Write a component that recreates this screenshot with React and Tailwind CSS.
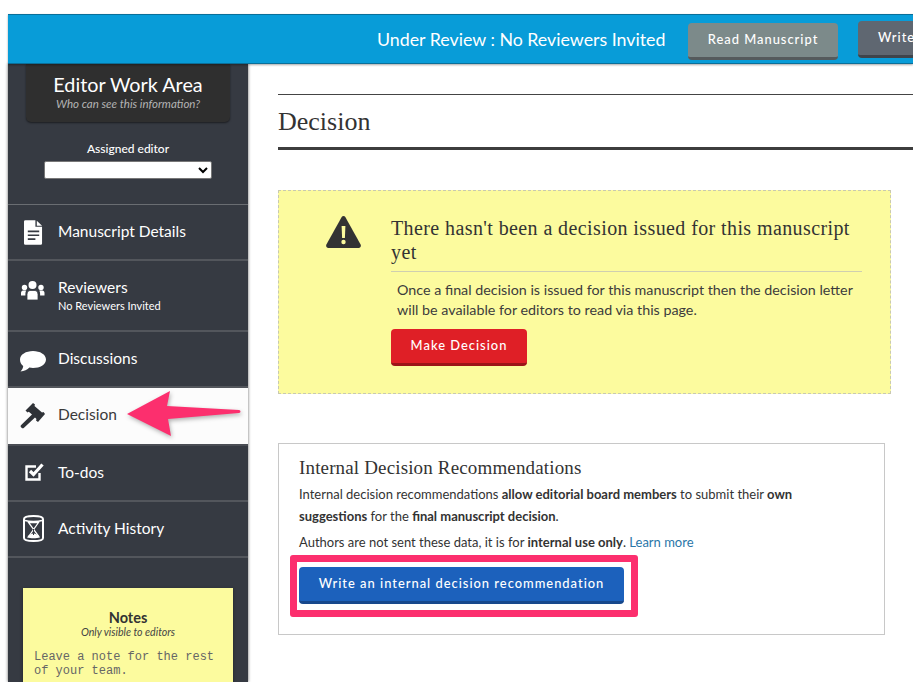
import React from "react";

const sans = "font-['Lato','Noto_Sans',sans-serif]";
const serif = "font-['Liberation_Serif','DejaVu_Serif',serif]";

function DocIcon() {
  return (
    <svg width="19" height="25" viewBox="0 0 20 26" fill="#fff">
      <path d="M1.5 0H12v7h7v17.5a1.5 1.5 0 0 1-1.5 1.5h-16A1.5 1.5 0 0 1 0 24.5v-23A1.5 1.5 0 0 1 1.5 0z" />
      <path d="M13.5 0.5 19 6h-5.5z" />
      <path d="M4 11h12v1.8H4zM4 15h12v1.8H4zM4 19h8v1.8H4z" fill="#363a42" />
    </svg>
  );
}
function PeopleIcon() {
  return (
    <svg width="26" height="19" viewBox="0 0 26 19" fill="#fff">
      <circle cx="12.500" cy="4" r="4" />
      <circle cx="4.500" cy="6.500" r="2.700" />
      <circle cx="21" cy="6.500" r="2.700" />
      <path d="M7 19v-5.500C7 11 8.500 9.500 10 9.500h5c1.500 0 3 1.500 3 4V19z" stroke="#363a42" strokeWidth="0.800" />
      <path d="M1 14.500v-2.500c0-1.500 1-2.500 2-2.500h3.300c-.6 1-.9 2-.9 3.500v1.500zM24.500 14.500v-2.500c0-1.500-1-2.500-2-2.500h-3.300c.6 1 .9 2 .9 3.500v1.500z" />
    </svg>
  );
}
function ChatIcon() {
  return (
    <svg width="26" height="21" viewBox="0 0 26 21" fill="#fff">
      <path d="M13 0c7 0 13 3.500 13 8.500S20 17 13 17c-1.300 0-2.500-.1-3.600-.4C7.500 18.800 4 20.500.5 20.500c1.500-1.500 2.600-3.200 2.700-5.500C1.200 13.500 0 11.200 0 8.500 0 3.500 6 0 13 0z" />
    </svg>
  );
}
function GavelIcon() {
  return (
    <svg width="26" height="26" viewBox="0 0 26 26" fill="#2f3237">
      <path d="M13 0 15 1.500 14.500 3 22 9.500 23.500 9 25 11 18 19 16 17.500 16.500 16 15 14.500 4 24.800c-.8.700-1.700.700-2.400 0l-.5-.5c-.7-.8-.6-1.700.1-2.400L12 11.500 8.800 8.800 7.500 9.500 5.500 7.500z" />
    </svg>
  );
}
function TodoIcon() {
  return (
    <svg width="20" height="18" viewBox="0 0 20 18" fill="none">
      <path d="M14.500 10v6.500H1.500V3.500H11" stroke="#fff" strokeWidth="2.400" />
      <path d="M5 8 8.500 11.500 17.500 1.500" stroke="#fff" strokeWidth="3.200" />
    </svg>
  );
}
function HourglassIcon() {
  return (
    <svg width="21" height="27" viewBox="0 0 21 27" fill="none">
      <path d="M1 4c0-4 19-4 19 0v19c0 4-19 4-19 0z" fill="#363a42" stroke="#fff" strokeWidth="2" />
      <path d="M2 5.500c4 1.300 13 1.300 17 0" stroke="#fff" strokeWidth="1.500" />
      <path d="M5.500 7.500h10L6 21h9.500L5.500 7.500z" stroke="#fff" strokeWidth="1.300" />
      <path d="M4 22.500c2-3 4.500-4 6.500-4s4.500 1 6.500 4c-3.500 1-9.500 1-13 0z" fill="#fff" />
      <path d="M10.500 14v6" stroke="#363a42" strokeWidth="1" />
    </svg>
  );
}
function WarnIcon() {
  return (
    <svg width="35" height="32" viewBox="0 0 35 32">
      <path d="M17.500 0c.8 0 1.400.4 1.800 1.100l15.300 27.500c.8 1.500-.2 3.400-1.900 3.400H2.300C.6 32-.4 30.100.4 28.600L15.700 1.100C16.100.4 16.700 0 17.500 0z" fill="#333" />
      <path d="M15.600 10h3.800l-.5 12h-2.800z" fill="#fcfb9e" />
      <circle cx="17.500" cy="26" r="2.200" fill="#fcfb9e" />
    </svg>
  );
}

function NavRow({ icon, iconCls = "", label, sub, active, h, labelCls = "-mt-[2px]" }) {
  return (
    <div className={`flex items-center shrink-0 border-b-2 ${h} ${active ? "bg-[#fcfcfc] text-[#3a3a3a] border-[#4a4d54]" : "text-white border-[#53565c]"}`}>
      <div className={`w-[50px] flex justify-center shrink-0 ${iconCls}`}>{icon}</div>
      <div className={`flex flex-col ${labelCls}`}>
        <span className="text-[15.500px] leading-[20px]">{label}</span>
        {sub && <span className="text-[11px] leading-[16px] mt-[1px]">{sub}</span>}
      </div>
    </div>
  );
}

function Btn({ children, cls }) {
  return (
    <div className={`flex items-center justify-center shrink-0 rounded-[4px] text-white text-[12.900px] tracking-[1px] font-medium border-b-[3px] ${cls}`}>
      {children}
    </div>
  );
}

export default function App() {
  return (
    <div className={`${sans} w-[913px] h-[682px] overflow-hidden bg-white pt-[14px] pl-[8px] text-[#363636]`}>
      <header className="relative z-10 h-[50px] w-[905px] bg-[#089cd8] border-t border-t-[#0a6f99] border-b border-b-[#0b6f99] shadow-[0_1px_2px_rgba(0,0,0,0.35)] flex items-center overflow-hidden">
        <div className="flex items-center ml-[369px] shrink-0">
          <span className="text-white text-[17.800px] w-[290px] whitespace-nowrap">Under Review : No Reviewers Invited</span>
          <Btn cls="ml-[21px] w-[150px] h-[37px] mt-[4px] bg-[#7c8a8a] border-[#555a5c]">Read Manuscript</Btn>
          <Btn cls="ml-[20px] w-[150px] h-[37px] bg-[#5f6771] border-[#3f444b] justify-start pl-[20px]">Write</Btn>
        </div>
      </header>
      <div className="flex">
        <aside className="w-[240px] h-[618px] shrink-0 bg-[#363a42] shadow-[0_0_3px_rgba(0,0,0,0.6)] overflow-hidden flex flex-col">
          <div className="mx-[18px] h-[58px] shrink-0 bg-[#2f2f2f] rounded-b-[5px] flex flex-col items-center pt-[9px] shadow-[0_1px_2px_rgba(0,0,0,0.5)]">
            <span className="text-white text-[19.800px] leading-[23px]">Editor Work Area</span>
            <span className="italic text-[#b4b4b4] text-[11.500px] leading-[16px]">Who can see this information?</span>
          </div>
          <div className="flex flex-col items-center shrink-0 pt-[19px] h-[83px] border-b border-[#6a6d72]">
            <span className="text-white text-[12px] leading-[15px] font-medium">Assigned editor</span>
            <select className="mt-[5px] w-[168px] h-[18px] bg-white rounded-[2px] text-black text-[12px] border border-[#777]" aria-label="Assigned editor" />
          </div>
          <NavRow h="h-[56px]" icon={<DocIcon />} label="Manuscript Details" />
          <NavRow h="h-[71px]" iconCls="-mt-[11px]" labelCls="" icon={<PeopleIcon />} label="Reviewers" sub="No Reviewers Invited" />
          <NavRow h="h-[56px]" iconCls="mt-[4px]" icon={<ChatIcon />} label="Discussions" />
          <NavRow h="h-[58px]" active iconCls="-mt-[1px]" labelCls="-mt-[4px]" icon={<GavelIcon />} label="Decision" />
          <NavRow h="h-[56px]" iconCls="pl-[3px] -mt-[2px]" icon={<TodoIcon />} label="To-dos" />
          <NavRow h="h-[56px]" iconCls="-mt-[2px]" icon={<HourglassIcon />} label="Activity History" />
          <div className="mt-[30px] mx-[15px] shrink-0 bg-[#fcfb9e] h-[120px] flex flex-col pt-[21px] shadow-[0_1px_3px_rgba(0,0,0,0.4)]">
            <span className="text-center font-bold text-[#333] text-[14.500px] leading-[17px]">Notes</span>
            <span className="text-center italic text-[#444] text-[10.600px] leading-[14px] -mt-[1px]">Only visible to editors</span>
            <p className="font-['Liberation_Mono',monospace] text-[#666] text-[12px] leading-[14px] mt-[11px] px-[11px]">
              Leave a note for the rest of your team.
            </p>
          </div>
        </aside>

        <main className="pl-[30px] pt-[30px] w-[665px] shrink-0">
          <div className="border-t border-[#444] h-[56px] border-b-[3px] border-b-[#3d3d3d] flex items-center">
            <h1 className={`${serif} text-[26px] text-[#333] leading-[32px] mt-[1px]`}>Decision</h1>
          </div>
          <section className="mt-[40px] w-[613px] h-[204px] bg-[#fcfb9e] border border-dashed border-[#c9c9b0] flex">
            <div className="w-[112px] shrink-0 flex justify-end pr-[30px] pt-[25px]">
              <WarnIcon />
            </div>
            <div className="w-[471px] pt-[25px]">
              <h2 className={`${serif} text-[20px] leading-[24px] tracking-[0.400px] text-[#333] pb-[7px] border-b border-[#cfcfb0]`}>
                There hasn't been a decision issued for this manuscript yet
              </h2>
              <p className="text-[14.300px] leading-[20px] text-[#3c3c3c] pl-[6px] pt-[8px]">
                Once a final decision is issued for this manuscript then the decision letter will be available for editors to read via this page.
              </p>
              <Btn cls="mt-[9px] w-[136px] h-[37px] bg-[#df1f26] border-[#9c1418]">Make Decision</Btn>
            </div>
          </section>
          <section className="relative mt-[49px] w-[607px] h-[192px] border border-[#c8c8c8] pl-[20px] pt-[12px]">
            <h2 className={`${serif} text-[19px] leading-[24px] text-[#333] tracking-[0.150px]`}>Internal Decision Recommendations</h2>
            <p className="text-[13px] leading-[22px] text-[#333] mt-[3px] w-[540px]">
              Internal decision recommendations <b>allow editorial board members</b> to submit their <b>own suggestions</b> for the <b>final manuscript decision</b>.
            </p>
            <p className="text-[13px] leading-[22px] text-[#333] mt-[4px]">
              Authors are not sent these data, it is for <b>internal use only</b>. <span className="text-[#2a76a8]">Learn more</span>
            </p>
            <Btn cls="mt-[14px] w-[325px] h-[37px] bg-[#1c61bc] border-[#17488c]">Write an internal decision recommendation</Btn>
            <div className="absolute left-[11px] top-[111px] w-[348px] h-[62px] border-[7px] border-[#fc2f6e] rounded-[3px]" />
          </section>
        </main>
      </div>
      <svg className="absolute left-[124px] top-[390px] drop-shadow-[1px_2px_2px_rgba(0,0,0,0.3)]" width="120" height="48" viewBox="0 0 120 48">
        <path d="M3 24 46 1 43 16 115 20c2 .5 2 2.500 0 3L44 29 47 46z" fill="#fc2f6e" />
      </svg>
    </div>
  );
}
